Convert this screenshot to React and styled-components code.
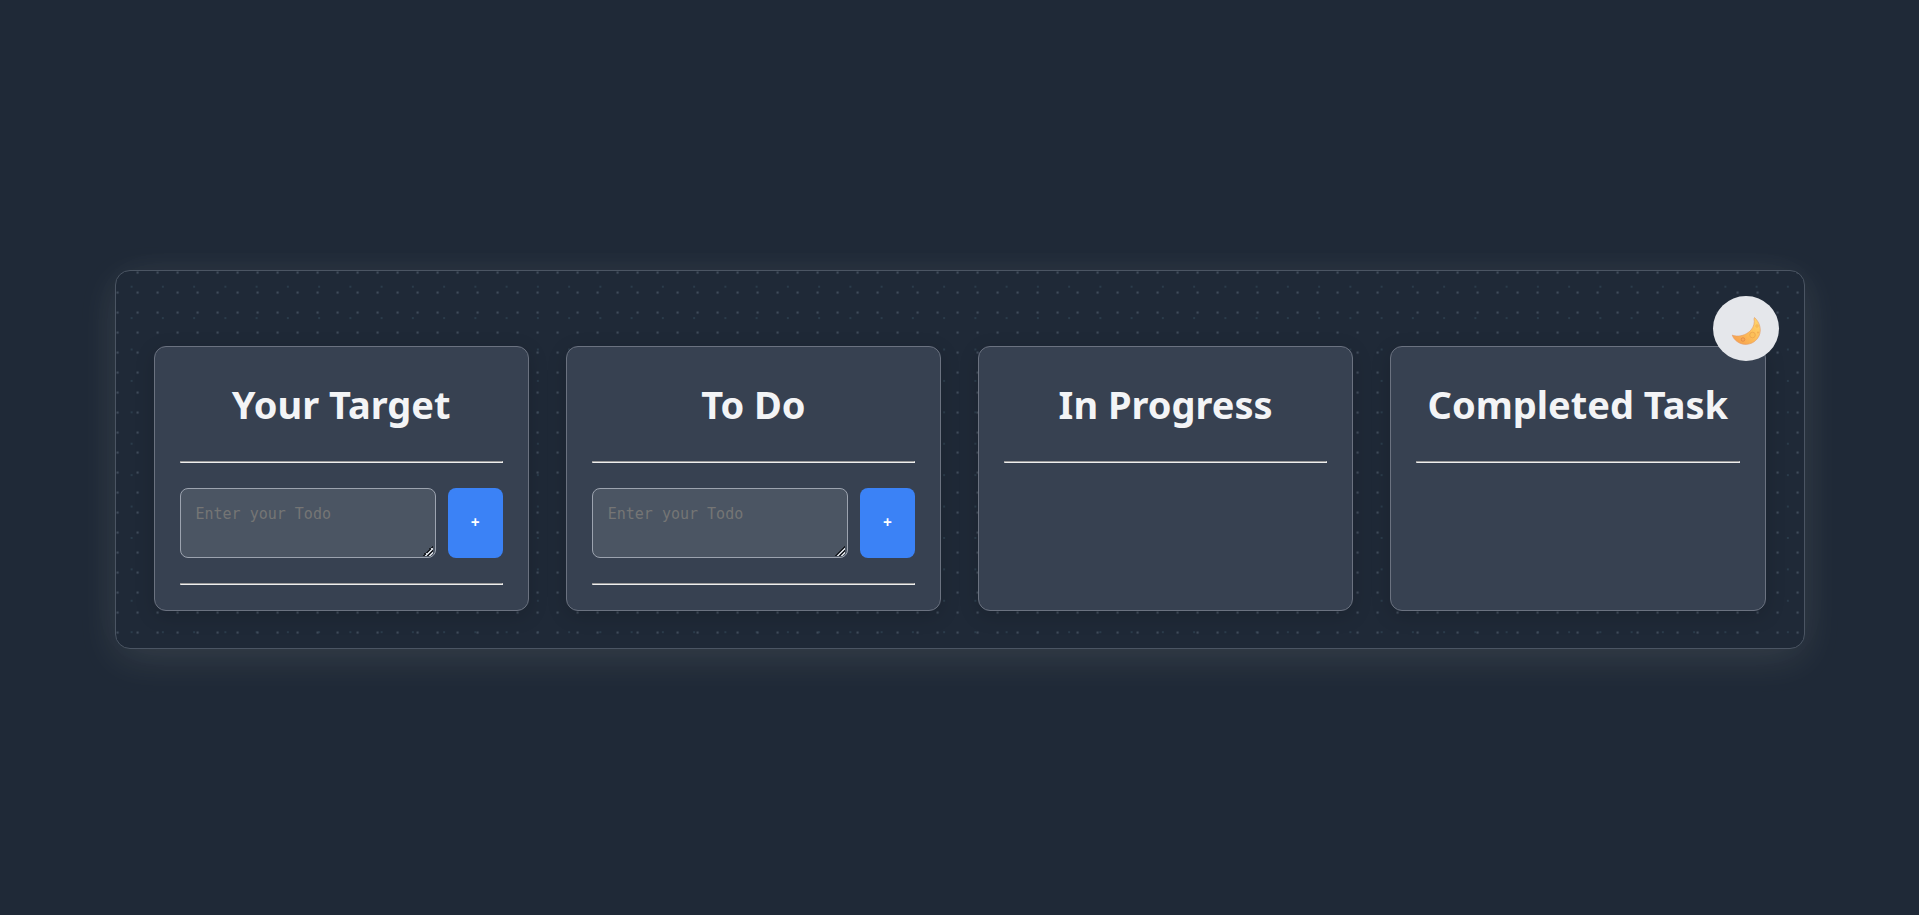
import React, { useState } from "react";
import styled, { createGlobalStyle } from "styled-components";

const GlobalStyle = createGlobalStyle`
  *, *::before, *::after { box-sizing: border-box; }
  body {
    margin: 0;
    background: #1f2937;
    color: #f3f4f6;
    font-family: "Segoe UI", "Noto Sans", "Open Sans", sans-serif;
  }
`;

const Page = styled.div`
  min-height: 100vh;
  padding-top: 4px;
  display: flex;
  align-items: center;
  justify-content: center;
`;

const Board = styled.main`
  position: relative;
  width: calc(100% - 229px);
  padding: 75px 38px 37px;
  display: grid;
  grid-template-columns: repeat(4, minmax(0, 1fr));
  gap: 37px;
  border: 1px solid #4b5563;
  border-radius: 15px;
  background-color: #1f2937;
  background-image:
    radial-gradient(circle at 8% 8%, #434f5e 0, transparent 2px),
    radial-gradient(circle, #2b3c4b 1px, transparent 1px);
  background-size: 20px 20px, 31px 31px;
  background-repeat: repeat, round;
  box-shadow:
    0 10px 40px rgba(255, 255, 220, 0.09),
    0 0 50px rgba(255, 255, 255, 0.03);
`;

const Column = styled.section`
  padding: 25px;
  border: 1px solid #6b7280;
  border-radius: 12px;
  background: #374151;
  box-shadow: 0 5px 20px rgba(0, 0, 0, 0.15);
`;

const Title = styled.h1`
  margin: 0;
  font-size: 38px;
  line-height: 64px;
  font-weight: 700;
  text-align: center;
  white-space: nowrap;
`;

const Divider = styled.hr`
  margin: 25px 0;

  &:last-child { margin-bottom: 0; }
`;

const EntryForm = styled.form`
  display: flex;
  gap: 12px;
`;

const EntryInput = styled.textarea`
  flex: 1;
  min-width: 0;
  height: 70px;
  padding: 15px;
  border: 1px solid #9ca3af;
  border-radius: 8px;
  background: #4b5563;
  color: #f3f4f6;
  font-family: "DejaVu Sans Mono", monospace;
  font-size: 15px;
  line-height: 20px;

  &::placeholder { color: #757575; }

  &::-webkit-resizer {
    background: linear-gradient(
      135deg,
      transparent 45%,
      #1c2026 45% 55%,
      #d1d5db 55% 67%,
      #1c2026 67% 77%,
      #d1d5db 77% 86%,
      transparent 86%
    ) right 2px bottom 1px / 10px 10px no-repeat;
  }
`;

const AddButton = styled.button`
  width: 55px;
  padding: 0 0 2px;
  border: 0;
  border-radius: 8px;
  background: #3b82f6;
  color: #fff;
  font: 700 14px "DejaVu Sans Mono", monospace;
  cursor: pointer;
`;

const ThemeToggle = styled.button`
  position: absolute;
  top: 25px;
  right: 25px;
  width: 66px;
  height: 65px;
  padding: 0;
  display: grid;
  place-items: center;
  border: 0;
  border-radius: 50%;
  background: #e5e7eb;
  cursor: pointer;
`;

const Moon = () => (
  <svg width="32" height="32" viewBox="0 0 32 32" aria-hidden="true">
    <defs>
      <linearGradient id="moon" x1="0" y1="1" x2="1" y2="0">
        <stop offset="0" stopColor="#f59a4c" />
        <stop offset="0.5" stopColor="#fdbd58" />
        <stop offset="1" stopColor="#ffd971" />
      </linearGradient>
    </defs>
    <path
      d="M24.5 4.500C29.500 9 32 16.500 29 23C25 31.500 14 34 7 28.500C4.500 26.500 2.500 24 2.300 22C3 22.300 4 22.900 6.500 23C12 23.300 17.500 21 21 17C24 13.500 24.800 9 24 6Z"
      fill="url(#moon)"
      stroke="#e39a68"
      strokeWidth="0.6"
    />
    <circle cx="22.500" cy="22" r="2.800" fill="#fcbf58" stroke="#e9a14c" strokeWidth="0.700" />
    <circle cx="13" cy="26.500" r="1.800" fill="#f8a955" stroke="#dc8446" strokeWidth="0.700" />
    <circle cx="27" cy="13" r="1.300" fill="#fdc45c" stroke="#eba94e" strokeWidth="0.500" />
    <circle cx="28" cy="19.500" r="0.900" fill="#f2aa4c" />
  </svg>
);

const Entry = ({ name }) => {
  const [text, setText] = useState("");
  return (
    <EntryForm onSubmit={(e) => e.preventDefault()}>
      <EntryInput
        aria-label={name}
        placeholder="Enter your Todo"
        value={text}
        onChange={(e) => setText(e.target.value)}
      />
      <AddButton type="submit">+</AddButton>
    </EntryForm>
  );
};

const columns = [
  { title: "Your Target", entry: true },
  { title: "To Do", entry: true },
  { title: "In Progress" },
  { title: "Completed Task" },
];

export default function App() {
  return (
    <>
      <GlobalStyle />
      <Page>
        <Board>
          {columns.map(({ title, entry }) => (
            <Column key={title}>
              <Title>{title}</Title>
              <Divider />
              {entry && (
                <>
                  <Entry name={title} />
                  <Divider />
                </>
              )}
            </Column>
          ))}
          <ThemeToggle type="button" aria-label="Toggle theme">
            <Moon />
          </ThemeToggle>
        </Board>
      </Page>
    </>
  );
}
